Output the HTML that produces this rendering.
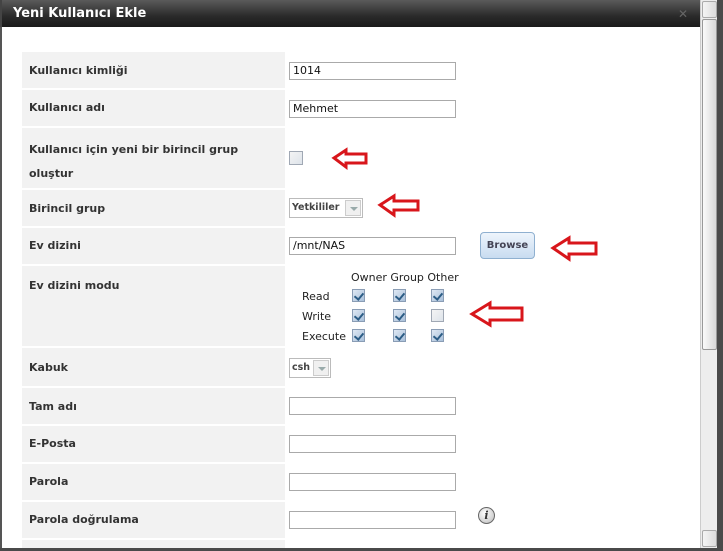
<!DOCTYPE html>
<html><head><meta charset="utf-8"><style>
*{box-sizing:border-box;margin:0;padding:0}
body{width:723px;height:551px;overflow:hidden;background:#fff;font-family:"DejaVu Sans",Verdana,sans-serif;position:relative}
.title{position:absolute;left:0;top:0;width:701px;height:27px;background:linear-gradient(#5a5a5a,#2a2a2a 60%,#1a1a1a);color:#fff;font-weight:bold;font-size:13px;line-height:27px;padding-left:11px;border-left:2px solid #444}
.x{position:absolute;left:678px;top:7px;color:#666;font-size:12px}
.left{position:absolute;left:0;top:27px;width:2px;height:524px;background:#555}
.sb{position:absolute;left:700px;top:0;width:17px;height:549px;background:#ededed;border-left:1px solid #ccc}
.sbbtn{position:absolute;left:1px;width:15px;height:17px;background:linear-gradient(90deg,#f4f4f4,#dcdcdc);border:1px solid #aaa;border-radius:2px}
.thumb{position:absolute;left:1px;top:19px;width:15px;height:331px;background:linear-gradient(90deg,#fafafa,#d8d8d8);border:1px solid #999;border-radius:2px}
.rb{position:absolute;left:717px;top:0;width:6px;height:551px;background:#4a4a4a}
.bb{position:absolute;left:0;top:548px;width:723px;height:3px;background:#4a4a4a}
.lab{position:absolute;left:22px;width:263px;background:#f2f2f2;font-weight:bold;font-size:11px;color:#333;padding-left:7px}
.lab span{position:absolute;left:7px}
.in{position:absolute;left:289px;width:167px;height:18px;border:1px solid #aaa;background:#fff;font-size:11px;color:#111;padding-left:3px;line-height:16px}
.cb{position:absolute;width:13px;height:13px;border:1px solid #8a9db5;background:linear-gradient(135deg,#dfe8f3,#a9c0da);}
.cb.e{background:linear-gradient(135deg,#f4f4f4,#dde3ea);border-color:#a0a8b4}
.cb.c::after{content:"";position:absolute;left:3px;top:1px;width:4px;height:7px;border:solid #2c5d86;border-width:0 2px 2px 0;transform:rotate(40deg)}
.t{position:absolute;font-size:11px;color:#222}
.sel{position:absolute;height:20px;border:1px solid #bbb;font-size:9.5px;font-weight:bold;color:#444;line-height:17px;padding-left:2px;background:#fff;white-space:nowrap;overflow:hidden}
.sel i{position:absolute;right:1px;top:1px;width:16px;height:16px;border:1px solid #ccc;background:#f0f0f0}
.sel i::after{content:"";position:absolute;left:4px;top:6px;border:4px solid transparent;border-top:4px solid #9aa;}
</style></head><body>
<div class="title">Yeni Kullanıcı Ekle</div><div class="x">✕</div>
<div class="left"></div>

<div class="lab" style="top:52px;height:36px"><span style="top:12px">Kullanıcı kimliği</span></div>
<div class="lab" style="top:90px;height:36px"><span style="top:11px">Kullanıcı adı</span></div>
<div class="lab" style="top:128px;height:60px"><span style="top:10px;line-height:24px;width:250px">Kullanıcı için yeni bir birincil grup oluştur</span></div>
<div class="lab" style="top:190px;height:36px"><span style="top:12px">Birincil grup</span></div>
<div class="lab" style="top:228px;height:36px"><span style="top:11px">Ev dizini</span></div>
<div class="lab" style="top:266px;height:80px"><span style="top:13px">Ev dizini modu</span></div>
<div class="lab" style="top:348px;height:38px"><span style="top:13px">Kabuk</span></div>
<div class="lab" style="top:388px;height:36px"><span style="top:12px">Tam adı</span></div>
<div class="lab" style="top:426px;height:36px"><span style="top:11px">E-Posta</span></div>
<div class="lab" style="top:464px;height:36px"><span style="top:11px">Parola</span></div>
<div class="lab" style="top:502px;height:36px"><span style="top:11px">Parola doğrulama</span></div>
<div class="lab" style="top:540px;height:11px"></div>

<div class="in" style="top:62px">1014</div>
<div class="in" style="top:100px">Mehmet</div>
<div class="cb e" style="left:289px;top:151px;width:14px;height:14px"></div>
<div class="sel" style="left:289px;top:198px;width:74px">Yetkililer<i></i></div>
<div class="in" style="top:237px">/mnt/NAS</div>
<div style="position:absolute;left:480px;top:232px;width:55px;height:27px;border:1px solid #8fb0d0;border-radius:4px;background:linear-gradient(#eef5fc,#c8dcf0);font-size:10px;font-weight:bold;color:#445;text-align:center;line-height:25px">Browse</div>

<div class="t" style="left:351px;top:271px">Owner Group Other</div>
<div class="t" style="left:302px;top:290px">Read</div>
<div class="t" style="left:302px;top:310px">Write</div>
<div class="t" style="left:302px;top:330px">Execute</div>
<div class="cb c" style="left:352px;top:289px"></div><div class="cb c" style="left:393px;top:289px"></div><div class="cb c" style="left:431px;top:289px"></div>
<div class="cb c" style="left:352px;top:309px"></div><div class="cb c" style="left:393px;top:309px"></div><div class="cb e" style="left:431px;top:309px"></div>
<div class="cb c" style="left:352px;top:329px"></div><div class="cb c" style="left:393px;top:329px"></div><div class="cb c" style="left:431px;top:329px"></div>

<div class="sel" style="left:289px;top:358px;width:42px">csh<i></i></div>
<div class="in" style="top:397px"></div>
<div class="in" style="top:435px"></div>
<div class="in" style="top:473px"></div>
<div class="in" style="top:511px"></div>
<div style="position:absolute;left:478px;top:507px;width:17px;height:17px;border-radius:50%;border:1px solid #666;background:radial-gradient(circle at 40% 35%,#fff,#bbb);font:italic bold 11px 'DejaVu Serif',serif;color:#333;text-align:center;line-height:15px">i</div>

<svg style="position:absolute;left:0;top:0" width="723" height="551">
<g fill="#fff" stroke="#d8161b" stroke-width="3" stroke-linejoin="miter">
<path d="M334,158 L346,150 L346,154 L366,154 L366,163 L346,163 L346,167 Z"/>
<path d="M380,205 L394,196 L394,201 L418,201 L418,210 L394,210 L394,215 Z"/>
<path d="M553,248 L569,238 L569,243 L596,243 L596,254 L569,254 L569,259 Z"/>
<path d="M472,314 L490,303 L490,308 L522,308 L522,320 L490,320 L490,325 Z"/>
</g></svg>

<div class="sb"><div class="sbbtn" style="top:1px"></div><div class="thumb"></div><div class="sbbtn" style="top:530px"></div></div>
<div class="rb"></div><div class="bb"></div>
</body></html>
